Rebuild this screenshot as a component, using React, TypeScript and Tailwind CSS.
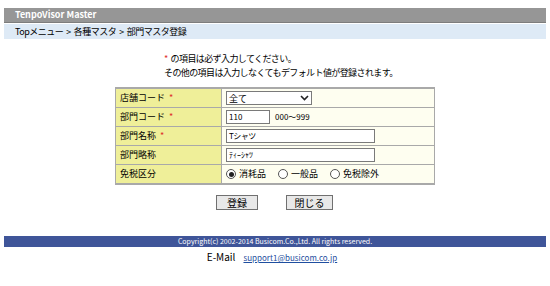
import React, { useState } from 'react';

const FONT = { fontFamily: '"Noto Sans CJK JP", "Liberation Sans", sans-serif' };

function Req() {
  return <span className="text-[#e0302a] ml-1">*</span>;
}

export default function App() {
  const [tax, setTax] = useState('consumable');

  const crumbs = ['Topメニュー', '各種マスタ', '部門マスタ登録'];

  const rows: { label: string; req?: boolean; content: React.ReactNode }[] = [
    {
      label: '店舗コード',
      req: true,
      content: (
        <div className="w-[86px] h-[14px] border border-[#7a7a7a] bg-white flex items-center justify-between px-[2px] text-[9px] leading-none">
          <span>全て</span>
          <svg width="9" height="6" viewBox="0 0 9 6"><path d="M1 1 L4.5 4.5 L8 1" stroke="#222" strokeWidth="1.6" fill="none" /></svg>
        </div>
      ),
    },
    {
      label: '部門コード',
      req: true,
      content: (
        <div className="flex items-center gap-[5px]">
          <div className="w-[44px] h-[14px] border border-[#7a7a7a] bg-white px-[2px] text-[8px] leading-[12px]">110</div>
          <span className="text-[8px]">000～999</span>
        </div>
      ),
    },
    {
      label: '部門名称',
      req: true,
      content: <div className="w-[149px] h-[14px] border border-[#7a7a7a] bg-white px-[2px] text-[8px] leading-[12px] tracking-[-0.5px]">Tシャツ</div>,
    },
    {
      label: '部門略称',
      content: <div className="w-[149px] h-[14px] border border-[#7a7a7a] bg-white px-[2px] text-[8px] leading-[12px]">ﾃｨｰｼｬﾂ</div>,
    },
    {
      label: '免税区分',
      content: (
        <div className="flex items-center text-[9px]">
          {[
            { k: 'consumable', t: '消耗品', w: 'w-[52px]' },
            { k: 'general', t: '一般品', w: 'w-[52px]' },
            { k: 'exempt', t: '免税除外', w: 'w-[60px]' },
          ].map((o) => (
            <label key={o.k} className={`flex items-center gap-[3px] ${o.w}`} onClick={() => setTax(o.k)}>
              <span className="w-[10px] h-[10px] rounded-full border border-[#555] bg-white flex items-center justify-center">
                {tax === o.k && <span className="w-[5px] h-[5px] rounded-full bg-[#222]" />}
              </span>
              <span>{o.t}</span>
            </label>
          ))}
        </div>
      ),
    },
  ];

  return (
    <div className="w-[550px] h-[286px] bg-white text-black" style={FONT}>
      <div className="pt-[8px] px-[4px]">
        <div className="h-[15px] bg-[#969696] border-b border-[#7d7d7d] text-white text-[9px] font-bold leading-[14px] pl-[11px]">
          TenpoVisor Master
        </div>
        <div className="h-[15px] bg-[#deeaf6] text-[9px] leading-[15px] pl-[11px] mt-[1px] tracking-[-0.5px] flex">
          {crumbs.map((c, i) => (
            <React.Fragment key={c}>
              {i > 0 && <span className="mx-[3px]">&gt;</span>}
              <span>{c}</span>
            </React.Fragment>
          ))}
        </div>
      </div>

      <div className="pl-[164px] pt-[13px] text-[9px] leading-[14px] tracking-[-0.6px]">
        <div>
          <span className="text-[#e0302a] mr-[3px]">*</span>の項目は必ず入力してください。
        </div>
        <div>その他の項目は入力しなくてもデフォルト値が登録されます。</div>
      </div>

      <div className="pl-[115px] pt-[7px]">
        <table className="w-[320px] border-separate border-spacing-y-[1px] bg-[#a9a9a9] border border-[#a9a9a9]">
          <tbody>
            {rows.map((r) => (
              <tr key={r.label} className="h-[18px]">
                <td className="w-[106px] bg-[#efef99] text-[9px] pl-[4px] py-0 border-r border-[#a9a9a9]">
                  {r.label}
                  {r.req && <Req />}
                </td>
                <td className="bg-[#fefef0] pl-[4px] py-[1px]">{r.content}</td>
              </tr>
            ))}
          </tbody>
        </table>
      </div>

      <div className="flex pl-[216px] gap-[28px] pt-[10px]">
        <button className="w-[42px] h-[15px] border border-[#707070] bg-[#e8e8e8] text-[10px] leading-none">登録</button>
        <button className="w-[47px] h-[15px] border border-[#707070] bg-[#e8e8e8] text-[10px] leading-none">閉じる</button>
      </div>

      <div className="px-[4px] pt-[26px]">
        <div className="h-[11px] bg-[#3f5599] text-white text-[7px] leading-[11px] text-center">
          Copyright(c) 2002-2014 Busicom.Co.,Ltd. All rights reserved.
        </div>
        <div className="flex justify-center items-baseline gap-[8px] pt-[2px] pr-[6px]">
          <span className="text-[10px]">E-Mail</span>
          <a className="text-[#1f4fa0] underline text-[8px]">support1@busicom.co.jp</a>
        </div>
      </div>
    </div>
  );
}
